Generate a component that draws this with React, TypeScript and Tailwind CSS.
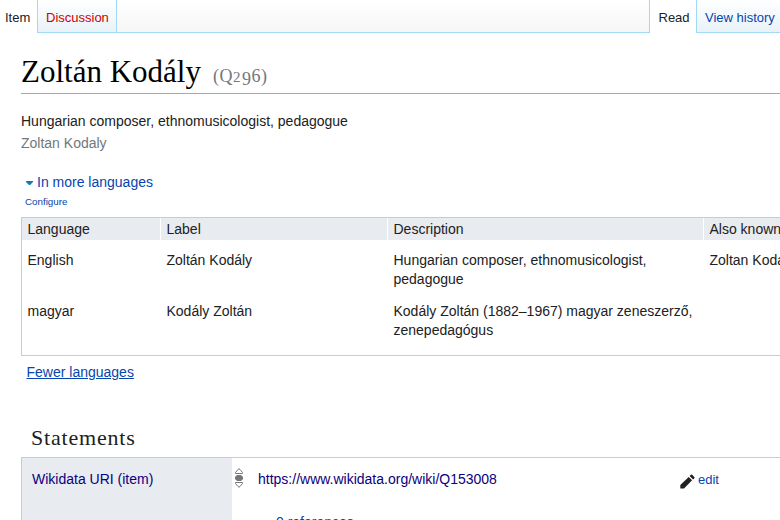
import React from "react";

const cols = "grid grid-cols-[139px_227px_316px_200px]";

function HeaderCell({ children, first }: { children: React.ReactNode; first?: boolean }) {
  return (
    <div className={first ? "pl-[5.5px]" : "-ml-px border-l border-white pl-[5.5px]"}>{children}</div>
  );
}

function Row({ lang, label, desc, alias }: { lang: string; label: string; desc: React.ReactNode; alias?: string }) {
  return (
    <div className={cols + " pt-[13px] leading-[19px]"}>
      <div className="pl-[5.5px]">{lang}</div>
      <div className="pl-[5.5px]">{label}</div>
      <div className="pl-[5.5px]">{desc}</div>
      <div className="pl-[5.5px]">{alias}</div>
    </div>
  );
}

function RankIcon() {
  return (
    <svg width="8" height="20" viewBox="0 0 8 20" fill="none" stroke="#72777d" strokeWidth="1">
      <path d="M.5 5.500h7v-1L5 1.500Q4 0 3 1.500L.5 4.500z" />
      <path d="M2 7h4l2 2v2l-2 2H2l-2-2V9z" fill="#72777d" stroke="none" />
      <path d="M.5 14.500h7v1L5 18.500Q4 20 3 18.500L.5 15.500z" />
    </svg>
  );
}

function PencilIcon() {
  return (
    <svg width="15" height="15" viewBox="0 0 15 15" fill="#202122">
      <path d="M.3 11 8.700 2.900 12.100 6.300 4 14.600H.3z" />
      <path d="M9.600 2 10.800.8Q11.500.2 12.200.8L14.300 2.900Q14.900 3.600 14.300 4.300L13.100 5.500z" />
    </svg>
  );
}

export default function App() {
  return (
    <div className="flex h-[520px] w-[780px] flex-col overflow-hidden bg-white font-['Liberation_Sans',Arial,sans-serif] text-[14px] text-[#202122]">
      <nav className="flex h-[33px] shrink-0 text-[13px] leading-[35px]">
        <div className="w-[37px] pl-[5px]">Item</div>
        <div className="w-[80px] border-x border-b border-[#a0d8f5] bg-linear-to-b from-white to-[#e8f2f8] pl-[8px] text-[#d00000]">Discussion</div>
        <div className="w-[533px] border-b border-r border-[#a0d8f5] bg-linear-to-b from-white to-[#f6f6f6]" />
        <div className="w-[46px] pl-[8.5px]">Read</div>
        <div className="w-[84px] whitespace-nowrap border-b border-l border-[#a0d8f5] bg-linear-to-b from-white to-[#e8f2f8] pl-[8px] text-[#0645ad]">View history</div>
      </nav>
      <main className="flex w-[900px] flex-col pl-[21px]">
        <h1 className="flex h-[61px] items-baseline border-b border-[#a2a9b1] pt-[19px] font-['Liberation_Serif',serif] text-[31px] leading-[40px] text-black">
          <span className="w-[192px] whitespace-nowrap">Zoltán Kodály</span>
          <span className="text-[18px] leading-[20px] tracking-[0.5px] text-[#72777d]">
            (Q<span className="text-[15px] tracking-[1.600px]">2</span><span className="align-[-3px]">9</span>6)
          </span>
        </h1>
        <div className="mt-[16px] h-[22px] leading-[22px]">Hungarian composer, ethnomusicologist, pedagogue</div>
        <div className="h-[22px] leading-[22px] text-[#72777d]">Zoltan Kodaly</div>
        <div className="mt-[17px] flex h-[22px] items-center pl-[5px] leading-[22px] text-[#0645ad]">
          <svg className="mt-[2px] mr-[4px]" width="7" height="4" viewBox="0 0 7 4"><path d="M0 0h7v1L4 4H3L0 1z" fill="#0d7eaf" /></svg>
          In more languages
        </div>
        <div className="h-[24px] pl-[4px] text-[9.800px] leading-[18px] text-[#0645ad]">Configure</div>
        <section className="h-[139px] border border-[#c8ccd1]">
          <div className={cols + " h-[22px] bg-[#e8ebf0] leading-[22px]"}>
            <HeaderCell first>Language</HeaderCell>
            <HeaderCell>Label</HeaderCell>
            <HeaderCell>Description</HeaderCell>
            <HeaderCell>Also known as</HeaderCell>
          </div>
          <div className="-mt-[2px]">
            <Row lang="English" label="Zoltán Kodály" desc={<>Hungarian composer, ethnomusicologist,<br />pedagogue</>} alias="Zoltan Kodaly" />
            <Row lang="magyar" label="Kodály Zoltán" desc={<>Kodály Zoltán (1882–1967) magyar zeneszerző,<br />zenepedagógus</>} />
          </div>
        </section>
        <a className="mt-[5px] h-[22px] pl-[5.5px] leading-[22px] text-[#0645ad] underline">Fewer languages</a>
        <h2 className="mt-[41px] h-[33px] pl-[10px] font-['Liberation_Serif',serif] text-[22px] leading-[28px] tracking-[0.800px] text-[#202122]">Statements</h2>
        <section className="flex h-[90px] border border-[#c8ccd1]">
          <div className="w-[210px] bg-[#e8ebf0] pl-[10px] pt-[10px] leading-[22px] text-[#0b0080]">Wikidata URI (item)</div>
          <div className="w-[26px] pl-[3px] pt-[10px]"><RankIcon /></div>
          <div className="w-[422px] pt-[10px] leading-[22px] text-[#0b0080]">
            <div>https://www.wikidata.org/wiki/Q153008</div>
            <div className="mt-[21px] pl-[18px] text-[#0645ad]">0 references</div>
          </div>
          <div className="flex h-[42px] gap-[3px] pt-[16px] text-[13px] leading-[12px] text-[#0645ad]">
            <PencilIcon />
            <span>edit</span>
          </div>
        </section>
      </main>
    </div>
  );
}
